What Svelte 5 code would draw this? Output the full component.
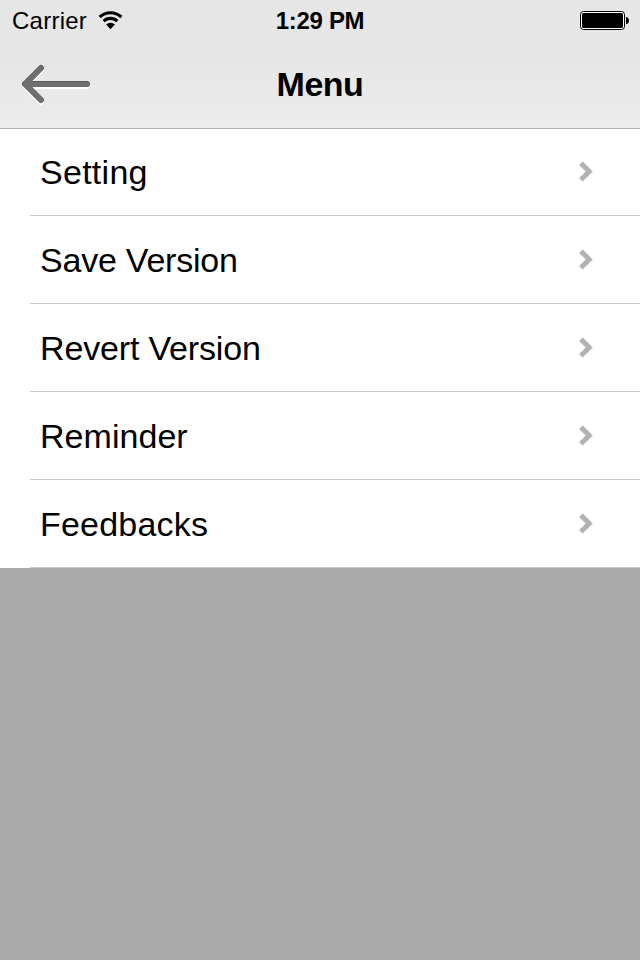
<script>
  const items = [
    { label: 'Setting', spacing: 0.28 },
    { label: 'Save Version', spacing: -0.22 },
    { label: 'Revert Version', spacing: -0.16 },
    { label: 'Reminder', spacing: 0.04 },
    { label: 'Feedbacks', spacing: 0.2 }
  ];
</script>

<div class="screen">
  <header>
    <div class="status">
      <div class="carrier">
        <span>Carrier</span>
        <svg width="26" height="20" viewBox="0 0 26 20" aria-hidden="true">
          <g fill="none" stroke="#000" stroke-width="3.1">
            <path d="M1.6 6A16 16 0 0 1 23.4 6" />
            <path d="M5.7 10.1A9.8 9.8 0 0 1 19.3 10.1" />
          </g>
          <path d="M8.1 13.6A6.3 6.3 0 0 1 16.9 13.6L12.5 18.2Z" />
        </svg>
      </div>
      <span class="time">1:29 PM</span>
      <svg class="battery" width="50" height="20" viewBox="0 0 50 20" aria-hidden="true">
        <rect x=".5" y=".5" width="44" height="18" rx="3" fill="#fff" stroke="#000" />
        <rect x="2" y="2" width="41" height="15" rx="1.6" />
        <path d="M46 6h1q2 1 2 3.5t-2 3.5h-1z" />
      </svg>
    </div>
    <div class="nav">
      <svg class="back" width="74" height="44" viewBox="0 0 74 44" aria-hidden="true">
        <g fill="none" stroke-width="6" stroke-linecap="round" stroke-linejoin="round">
          <path stroke="#fff" d="M21 6L5 22L21 38M5 22H67" />
          <path stroke="#5c5c5c" d="M21 4L5 20L21 36M5 20H67" />
          <path stroke="#6f6f6f" stroke-width="5" d="M21 4.5L5.4 20.3L21 36M5.4 20.5H67" />
        </g>
        <path fill="#6f6f6f" d="M8 16.5L14 18V23L8 24Z" />
      </svg>
      <h1>Menu</h1>
    </div>
  </header>
  <ul>
    {#each items as item}
      <li>
        <span style="letter-spacing: {item.spacing}px">{item.label}</span>
        <svg width="16" height="22" viewBox="0 0 16 22" aria-hidden="true">
          <path d="M2.9 2.2L11.2 10.5L2.9 18.8" fill="none" stroke="#b2b2b2" stroke-width="5" />
        </svg>
      </li>
    {/each}
  </ul>
</div>

<style>
  .screen {
    height: 960px;
    background: #aaa;
    color: #000;
    font-family: "Liberation Sans", Arial, sans-serif;
  }
  header {
    box-sizing: border-box;
    height: 129px;
    border-bottom: 1px solid #b2b2b2;
    background: linear-gradient(#e6e6e6, #e6e6e6 60px, #ececec);
  }
  .status {
    display: grid;
    grid-template-columns: 1fr auto 1fr;
    height: 40px;
    padding: 0 10px 0 12px;
    font-size: 24px;
    line-height: 42px;
  }
  .carrier {
    display: flex;
    gap: 11px;
    letter-spacing: 0.25px;
  }
  .carrier svg {
    margin-top: 11px;
  }
  .time {
    margin-right: 2px;
    font-weight: bold;
    letter-spacing: -0.3px;
  }
  .battery {
    justify-self: end;
    margin-top: 11px;
  }
  .nav {
    display: grid;
    grid-template-columns: 1fr auto 1fr;
    height: 88px;
    padding: 0 20px;
  }
  .back {
    margin-top: 24px;
  }
  h1 {
    margin: 0;
    font-size: 34px;
    line-height: 88px;
    letter-spacing: -0.5px;
  }
  ul {
    margin: 0;
    padding: 0 0 0 30px;
    list-style: none;
    background: #fff;
  }
  li {
    box-sizing: border-box;
    display: flex;
    align-items: center;
    justify-content: space-between;
    height: 88px;
    padding: 0 46px 0 10px;
    border-bottom: 1px solid #c8c8c8;
    font-size: 34px;
  }
  li:first-child {
    height: 87px;
  }
  li:not(:first-child) span {
    padding-top: 2px;
  }
</style>
